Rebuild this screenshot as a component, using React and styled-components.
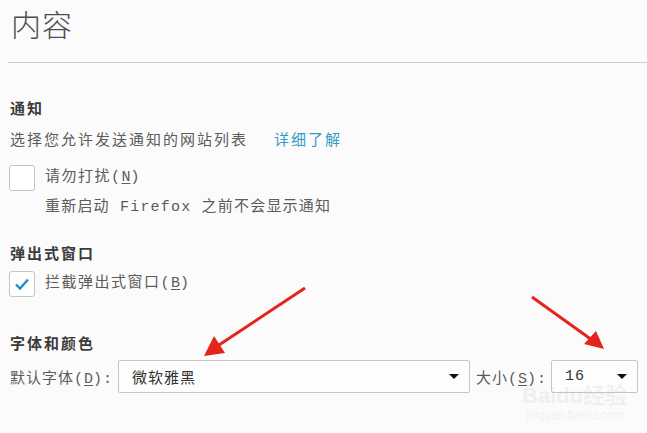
import React from 'react';
import styled, { createGlobalStyle } from 'styled-components';

const GlobalStyle = createGlobalStyle`
    html, body {
        margin: 0;
        padding: 0;
        background: #fbfbfb;
    }
    body {
        font-family: "Liberation Mono", "Noto Sans CJK SC", monospace;
        color: #5a5a5a;
    }
`;

const Pagina = styled.div`
    position: relative;
    width: 647px;
    height: 433px;
    overflow: hidden;
`;

const Cabecera = styled.header`
    box-sizing: border-box;
    height: 63px;
    margin-left: 8px;
    padding: 3px 0 0 3px;
    border-bottom: 1px solid #cdcdcd;
`;

const Titulo = styled.h1`
    margin: 0;
    font-family: "Noto Sans CJK SC", sans-serif;
    font-weight: 300;
    font-size: 30px;
    line-height: 40px;
    letter-spacing: 1px;
    color: #4e4e52;
`;

const Seccion = styled.section`
    padding-left: 10px;
    margin-top: ${props => props.$top}px;
`;

const Encabezado = styled.h2`
    margin: 0;
    font-family: "Noto Sans CJK SC", sans-serif;
    font-size: 15px;
    font-weight: 700;
    line-height: 20px;
    letter-spacing: 2px;
    color: #3b3b3b;
`;

const Texto = styled.p`
    margin: ${props => props.$top || 0}px 0 0;
    font-size: 15px;
    line-height: 20px;
    letter-spacing: 2px;
    color: #5c5c5c;
`;

const Enlace = styled.a`
    margin-left: 26px;
    color: #2f9bc8;
    text-decoration: none;
    cursor: pointer;
`;

const Fila = styled.label`
    display: flex;
    align-items: center;
    gap: 10px;
    margin-top: ${props => props.$top}px;
    margin-left: -1px;
    font-size: 15px;
    line-height: 20px;
    letter-spacing: 1.5px;
    color: #5c5c5c;
`;

const Caja = styled.span`
    box-sizing: border-box;
    display: flex;
    align-items: center;
    justify-content: center;
    width: 26px;
    height: 26px;
    border: 1px solid #c4c4c4;
    border-radius: 3px;
    background: #fff;
`;

const Nota = styled.p`
    margin: 7px 0 0 35px;
    font-size: 15px;
    line-height: 20px;
    letter-spacing: 1.2px;
    color: #5c5c5c;
`;

const Atajo = styled.u`
    text-decoration: underline;
    text-underline-offset: 2px;
    letter-spacing: 0;
`;

const FilaFuente = styled.div`
    display: flex;
    align-items: center;
    margin-top: 7px;
    font-size: 15px;
    letter-spacing: 1px;
    color: #5c5c5c;
    white-space: nowrap;
`;

const Selector = styled.div`
    box-sizing: border-box;
    flex-shrink: 0;
    display: flex;
    align-items: center;
    justify-content: space-between;
    width: ${props => props.$ancho}px;
    height: 33px;
    margin-left: ${props => props.$izq}px;
    padding: 0 10px 0 13px;
    border: 1px solid #c6c6c6;
    border-radius: 2px;
    background: #fdfdfd;
    color: #333;
    font-size: 15px;
`;

const Flecha = styled.span`
    width: 0;
    height: 0;
    border-left: 5px solid transparent;
    border-right: 5px solid transparent;
    border-top: 5px solid #111;
`;

const Rotulo = styled.span`
    flex-shrink: 0;
    margin-left: ${props => props.$izq || 0}px;
`;

const Marca = styled.div`
    position: absolute;
    left: 522px;
    top: 384px;
    font-family: "Liberation Sans", "Noto Sans CJK SC", sans-serif;
    color: rgba(190, 190, 190, 0.2);
    text-align: center;
    pointer-events: none;
`;

const MarcaGrande = styled.div`
    font-size: 22px;
    font-weight: 700;
    line-height: 24px;
`;

const MarcaChica = styled.div`
    font-size: 12px;
    line-height: 14px;
`;

const Capa = styled.svg`
    position: absolute;
    left: 0;
    top: 0;
    pointer-events: none;
`;

const App = () => {
    return (
        <Pagina>
            <GlobalStyle />
            <Cabecera>
                <Titulo>内容</Titulo>
            </Cabecera>

            <Seccion $top={35}>
                <Encabezado>通知</Encabezado>
                <Texto $top={14}>
                    选择您允许发送通知的网站列表<Enlace>详细了解</Enlace>
                </Texto>
                <Fila $top={13}>
                    <Caja />
                    <span>请勿打扰(<Atajo>N</Atajo>)</span>
                </Fila>
                <Nota>重新启动 Firefox 之前不会显示通知</Nota>
            </Seccion>

            <Seccion $top={25}>
                <Encabezado>弹出式窗口</Encabezado>
                <Fila $top={8}>
                    <Caja>
                        <svg width="16" height="14" viewBox="0 0 16 14">
                            <path d="M2 7.5 L6 11.5 L14 2.5" fill="none" stroke="#1d8dcc" strokeWidth="2.4" />
                        </svg>
                    </Caja>
                    <span>拦截弹出式窗口(<Atajo>B</Atajo>)</span>
                </Fila>
            </Seccion>

            <Seccion $top={36}>
                <Encabezado>字体和颜色</Encabezado>
                <FilaFuente>
                    <Rotulo>默认字体(<Atajo>D</Atajo>):</Rotulo>
                    <Selector $ancho={352} $izq={5}>
                        <span>微软雅黑</span>
                        <Flecha />
                    </Selector>
                    <Rotulo $izq={6}>大小(<Atajo>S</Atajo>):</Rotulo>
                    <Selector $ancho={87} $izq={4}>
                        <span>16</span>
                        <Flecha />
                    </Selector>
                </FilaFuente>
            </Seccion>

            <Marca>
                <MarcaGrande>Baidu经验</MarcaGrande>
                <MarcaChica>jingyan.baidu.com</MarcaChica>
            </Marca>

            <Capa width="647" height="433">
                <line x1="305" y1="288" x2="219" y2="345" stroke="#e3231c" strokeWidth="3" />
                <polygon points="204,356 214,336 225,353" fill="#e3231c" />
                <line x1="532" y1="297" x2="592" y2="340" stroke="#e3231c" strokeWidth="3" />
                <polygon points="604,349 584,344 596,331" fill="#e3231c" />
            </Capa>
        </Pagina>
    );
}

export default App;
